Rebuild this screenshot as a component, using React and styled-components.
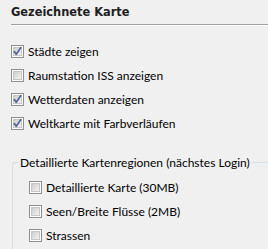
import React from "react";
import styled, { createGlobalStyle } from "styled-components";

const GlobalStyle = createGlobalStyle`
  html, body {
    margin: 0;
    padding: 0;
    background: #f0f0f0;
  }
  body {
    font-family: Lato, "Noto Sans", sans-serif;
    font-size: 12px;
    color: #000;
  }
`;

const Panel = styled.div`
  width: 268px;
  height: 249px;
  overflow: hidden;
  padding: 5px 0 0 11px;
  box-sizing: border-box;
`;

const Header = styled.div`
  font-family: "DejaVu Sans", sans-serif;
  font-weight: bold;
  font-size: 11.4px;
  line-height: 15px;
  color: #1e1e1e;
`;

const Rule = styled.div`
  margin-top: 4px;
  height: 1px;
  background: #a0a0a0;
  border-bottom: 1px solid #ffffff;
`;

const List = styled.div`
  display: flex;
  flex-direction: column;
  gap: 11px;
  margin-top: 19px;
`;

const Row = styled.label`
  display: flex;
  align-items: center;
  gap: 4px;
  height: 13px;
  line-height: 13px;
  white-space: nowrap;
  font-size: 12px;
`;

const Box = styled.svg`
  flex: none;
  width: 13px;
  height: 13px;
`;

const Group = styled.fieldset`
  margin: 25px 0 0 1px;
  padding: 0;
  border: none;
  border-top: 1px solid #d5dfe5;
  border-left: 1px solid #d5dfe5;
  border-radius: 3px 0 0 0;
  min-width: 0;
`;

const Legend = styled.legend`
  padding: 0 2px;
  margin-left: 5px;
  font-size: 12px;
  line-height: 15px;
  white-space: nowrap;
`;

const GroupList = styled(List)`
  margin-top: 11px;
  padding: 0 0 12px 16px;
`;

const CheckBox = ({ checked }) => (
  <Box viewBox="0 0 13 13">
    <defs>
      <linearGradient id="cbfill" x1="0" y1="0" x2="1" y2="1">
        <stop offset="0" stopColor="#cbcbcb" />
        <stop offset="1" stopColor="#f6f6f6" />
      </linearGradient>
    </defs>
    <rect x="0.5" y="0.5" width="12" height="12" fill="#fff" stroke="#8e8f8f" />
    <rect x="2.5" y="2.5" width="8" height="8" fill="url(#cbfill)" stroke="#c6c6c6" strokeWidth="1" />
    {checked && (
      <path
        d="M3.3 6.6 L5.3 9.2 L9.8 2.6"
        fill="none"
        stroke="#4a5f97"
        strokeWidth="1.6"
        strokeLinecap="round"
        strokeLinejoin="round"
      />
    )}
  </Box>
);

const Option = ({ checked, children }) => (
  <Row>
    <CheckBox checked={checked} />
    <span>{children}</span>
  </Row>
);

export default function App() {
  return (
    <>
      <GlobalStyle />
      <Panel>
        <Header>Gezeichnete Karte</Header>
        <Rule />
        <List>
          <Option checked>Städte zeigen</Option>
          <Option>Raumstation ISS anzeigen</Option>
          <Option checked>Wetterdaten anzeigen</Option>
          <Option checked>Weltkarte mit Farbverläufen</Option>
        </List>
        <Group>
          <Legend>Detaillierte Kartenregionen (nächstes Login)</Legend>
          <GroupList>
            <Option>Detaillierte Karte (30MB)</Option>
            <Option>Seen/Breite Flüsse (2MB)</Option>
            <Option>Strassen</Option>
          </GroupList>
        </Group>
      </Panel>
    </>
  );
}
